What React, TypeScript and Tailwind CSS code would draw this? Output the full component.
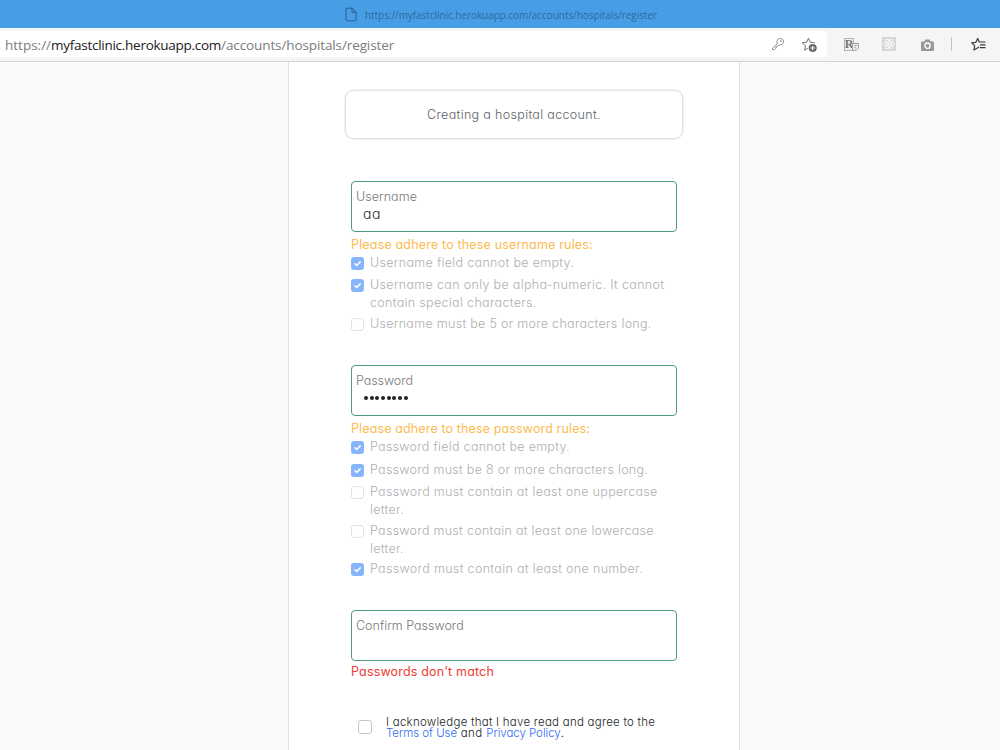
import type { ReactNode } from 'react';

function Check({ checked = false }: { checked?: boolean }) {
  return checked ? (
    <span className="mt-[3px] flex h-[13px] w-[13px] shrink-0 items-center justify-center rounded-[3px] bg-[#86b5fb]">
      <svg width="9" height="9" viewBox="0 0 9 9" fill="none" stroke="#fff" strokeWidth="1.5" strokeLinecap="round" strokeLinejoin="round">
        <path d="M1.9 4.8 3.7 6.4 7.2 2.9" />
      </svg>
    </span>
  ) : (
    <span className="mt-[3px] h-[13px] w-[13px] shrink-0 rounded-[3px] border border-[#e2e2e2] bg-white" />
  );
}

function Rule({ checked, className, children }: { checked?: boolean; className: string; children: ReactNode }) {
  return (
    <div className={`flex gap-[6px] text-[12.5px] leading-[18px] text-[#adafb1] ${className}`}>
      <Check checked={checked} />
      <div className="whitespace-nowrap">{children}</div>
    </div>
  );
}

function Field({ label, className, children }: { label: string; className: string; children?: ReactNode }) {
  return (
    <div className="h-[51px] rounded-[4px] border border-[#4c9c7f] bg-white pl-[4px] pt-[6px]">
      <div className={`text-[12.5px] leading-[18px] text-[#77797b] ${className}`}>{label}</div>
      {children}
    </div>
  );
}

const STAR = 'M7.5 1.2 9.4 5.3 13.8 5.8 10.5 8.8 11.4 13.2 7.5 11 3.6 13.2 4.5 8.8 1.2 5.8 5.6 5.3Z';

export default function App() {
  return (
    <div className="flex h-[750px] w-[1000px] flex-col overflow-hidden bg-[#f8f9fb] font-['Inter',sans-serif] font-light [font-feature-settings:'cv11']">
      <header className="flex h-[28px] shrink-0 items-center bg-[#479ee5] pl-[345px] font-['Open_Sans',sans-serif] font-normal text-[#2c6a9f]">
        <svg width="12" height="15" viewBox="0 0 12 15" fill="none" stroke="#285f90" strokeWidth="1">
          <path d="M1.5 1.2H7.2L11 5V12.8Q11 13.8 10 13.8H2Q1 13.8 1 12.8V2Q1 1.2 1.9 1.2ZM7 1.4V5.2H10.8" />
        </svg>
        <span className="ml-[8px] mt-[2px] text-[10px] tracking-[-0.06px]">https://myfastclinic.herokuapp.com/accounts/hospitals/register</span>
      </header>

      <div className="flex h-[34px] shrink-0 border-b border-[#d3d4d5] bg-[#f5f5f5] pt-[3px] font-normal">
        <div className="flex h-[26px] w-[827px] items-center rounded-r-[2px] bg-white pl-[5px] font-['Open_Sans',sans-serif] text-[13.5px] text-[#7b7b7b]">
          <span className="mt-[2px]">https://</span>
          <span className="mt-[2px] tracking-[-0.27px] text-[#202020]">myfastclinic.herokuapp.com</span>
          <span className="mt-[2px] tracking-[-0.11px]">/accounts/hospitals/register</span>
          <svg className="ml-auto" width="14" height="14" viewBox="0 0 14 14" fill="none" stroke="#909090" strokeWidth="1">
            <path d="M6.2 6.9C5.3 3.8 6.7 1.6 9.2 1.5C11.4 1.5 12.8 3 12.5 5.2C12.2 7.3 10.2 8.5 8 7.9L6.8 9.2H5.7V10.4H4.5V11.6L3.6 12.5H1.5V11.2Z" />
            <circle cx="9.9" cy="4.1" r="0.5" />
          </svg>
          <svg className="ml-[16px] mr-[8px] mt-px" width="18" height="16" viewBox="0 0 18 16" fill="none">
            <path d={STAR} stroke="#747474" strokeWidth="1" strokeLinejoin="round" />
            <circle cx="11.7" cy="11" r="5" fill="#fff" />
            <circle cx="11.7" cy="11" r="4" fill="#686868" />
            <path d="M11.7 8.8V13.2M9.5 11H13.9" stroke="#fff" />
          </svg>
        </div>
        <div className="flex h-[26px] flex-1 items-center pl-[17px]">
          <span className="relative flex h-[13px] w-[10px] items-center justify-center border border-[#b1b1b1] bg-[#f1f1f1] font-['Liberation_Serif',serif] text-[12px] font-bold leading-none text-[#777777]">
            R
            <svg className="absolute -right-[6px] top-[3px]" width="7" height="9" viewBox="0 0 7 9" fill="#f4f4f4" stroke="#9a9a9a">
              <path d="M0.5 1.5H6.3V6L4.5 8.2H0.5ZM2 3.7H4.8M2.5 5.7H4" />
            </svg>
          </span>
          <svg className="ml-[28px]" width="14" height="14" viewBox="0 0 14 14" fill="none" stroke="#f8f8f8" strokeWidth="0.9">
            <rect width="14" height="14" fill="#d6d6d6" stroke="none" />
            <ellipse cx="7" cy="7" rx="5.3" ry="2.1" />
            <ellipse cx="7" cy="7" rx="5.3" ry="2.1" transform="rotate(60 7 7)" />
            <ellipse cx="7" cy="7" rx="5.3" ry="2.1" transform="rotate(120 7 7)" />
            <circle cx="7" cy="7" r="0.8" fill="#f6f6f6" />
          </svg>
          <svg className="ml-[25px] mt-px" width="13" height="12" viewBox="0 0 13 12">
            <path d="M1 2.5H3.3L4.3 0.6H8.7L9.7 2.5H12Q13 2.5 13 3.5V11Q13 12 12 12H1Q0 12 0 11V3.5Q0 2.5 1 2.5Z" fill="#999" />
            <circle cx="6.5" cy="6.7" r="2.7" fill="#999" stroke="#fff" strokeWidth="1.3" />
          </svg>
          <span className="ml-[17px] h-[14px] w-px bg-[#c2c2c2]" />
          <svg className="ml-[19px]" width="16" height="15" viewBox="0 0 16 15" fill="none" stroke="#3b3b3b" strokeWidth="1.2" strokeLinejoin="round">
            <path d="M8.2 9.8 6.5 11 2.9 13 3.7 8.9 0.8 5.8 4.9 5.3 6.7 1.4 8.3 5H14.5M9 7.8H14.5M9 10.6H14.5" />
          </svg>
        </div>
      </div>

      <main className="ml-[288px] w-[452px] flex-1 border-x border-[#dfe1e3] bg-white px-[56px]">
        <div className="mt-[28px] flex h-[49px] items-center justify-center rounded-[8px] border-[1.5px] border-[#dfe2e6] text-[12.5px] tracking-[0.34px] text-[#5c6269] shadow-[0_0_0_0.5px_#dfe2e6]">
          <span className="mt-px">Creating a hospital account.</span>
        </div>

        <form className="mt-[42px] px-[6px]">
          <Field label="Username" className="tracking-[0.05px]">
            <div className="-mt-px pl-[7px] text-[14px] leading-[18px] tracking-[0.6px] text-[#24292e]">aa</div>
          </Field>
          <div className="mt-[4px] text-[12.5px] font-normal leading-[18px] tracking-[0.17px] text-[#fcbb52]">Please adhere to these username rules:</div>
          <Rule checked className="tracking-[0.32px]">Username field cannot be empty.</Rule>
          <Rule checked className="mt-[4px] tracking-[0.33px]">
            Username can only be alpha-numeric. It cannot
            <br />
            contain special characters.
          </Rule>
          <Rule className="mt-[3px] tracking-[0.3px]">Username must be 5 or more characters long.</Rule>

          <div className="mt-[32px]">
            <Field label="Password" className="tracking-[-0.07px]">
              <div className="-mt-px flex h-[18px] items-center gap-[1.7px] pl-[8px]">
                {Array.from({ length: 8 }, (_, i) => (
                  <span key={i} className="h-[4px] w-[4px] rounded-full bg-[#202326]" />
                ))}
              </div>
            </Field>
          </div>
          <div className="mt-[4px] text-[12.5px] font-normal leading-[18px] tracking-[0.13px] text-[#fcbb52]">Please adhere to these password rules:</div>
          <Rule checked className="tracking-[0.285px]">Password field cannot be empty.</Rule>
          <Rule checked className="mt-[5px] tracking-[0.285px]">Password must be 8 or more characters long.</Rule>
          <Rule className="mt-[4px] tracking-[0.325px]">
            Password must contain at least one uppercase
            <br />
            letter.
          </Rule>
          <Rule className="mt-[3px] tracking-[0.29px]">
            Password must contain at least one lowercase
            <br />
            letter.
          </Rule>
          <Rule checked className="mt-[2px] tracking-[0.335px]">Password must contain at least one number.</Rule>

          <div className="mt-[32px]">
            <Field label="Confirm Password" className="tracking-[0.01px]" />
          </div>
          <div className="mt-[2px] text-[12.5px] font-normal leading-[18px] tracking-[0.165px] text-[#ef3b36]">Passwords don't match</div>

          <div className="mt-[34px] flex pl-[7px] text-[11.5px] leading-[11px] text-[#212529]">
            <span className="mt-[5px] h-[14px] w-[14px] shrink-0 rounded-[3px] border border-[#c5c6c7] bg-white" />
            <div className="ml-[14px] mt-[2px] whitespace-nowrap">
              <div className="tracking-[0.25px]">I acknowledge that I have read and agree to the</div>
              <div>
                <span className="tracking-[-0.04px] text-[#2f6bf4]">Terms of Use</span>
                <span className="tracking-[0.4px]"> and </span>
                <span className="tracking-[-0.04px] text-[#2f6bf4]">Privacy Policy</span>.
              </div>
            </div>
          </div>
        </form>
      </main>
    </div>
  );
}
